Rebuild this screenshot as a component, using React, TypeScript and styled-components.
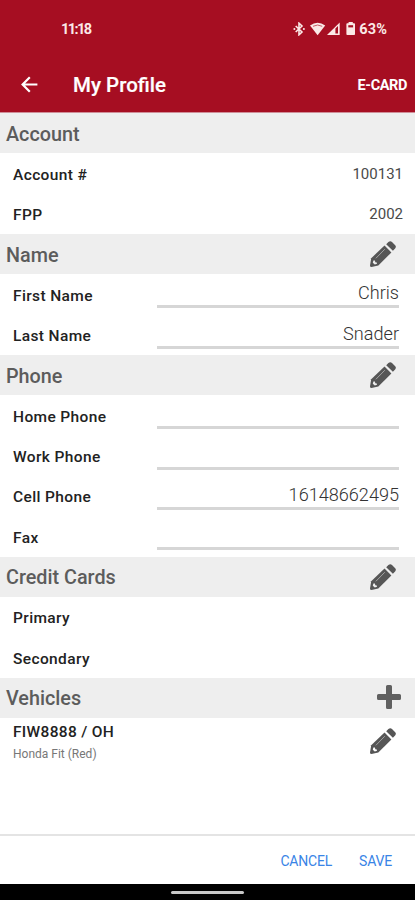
import React from 'react';
import styled, { createGlobalStyle } from 'styled-components';

const GlobalStyle = createGlobalStyle`
  * { box-sizing: border-box; }
  body { margin: 0; background: #fff; font-family: Roboto, "Liberation Sans", sans-serif; }
  button { font-family: inherit; border: 0; padding: 0; background: none; display: block; }
  svg { display: block; }
`;

const Screen = styled.div`
  width: 415px;
  height: 900px;
  display: flex;
  flex-direction: column;
  overflow: hidden;
  background: #fff;
`;

const Header = styled.header`
  flex: none;
  height: 113px;
  background: #a60e22;
  border-bottom: 1px solid #cf8e98;
  color: #fff;
`;

const StatusBar = styled.div`
  height: 58px;
  padding: 0 28px 0 61px;
  display: flex;
  align-items: center;
  justify-content: space-between;
  font-size: 14.5px;
  font-weight: 700;
  color: #fbe9e7;
`;

const Clock = styled.span`
  letter-spacing: -1.6px;
`;

const StatusIcons = styled.div`
  display: flex;
  align-items: center;
`;

const Battery = styled.span`
  margin-left: 3px;
  letter-spacing: 0.1px;
`;

const AppBar = styled.div`
  height: 54px;
  padding: 0 8px 0 21px;
  display: flex;
  align-items: center;
`;

const Title = styled.h1`
  margin: 0 0 0 35px;
  flex: 1;
  font-size: 20.5px;
  font-weight: 500;
  -webkit-text-stroke: 0.2px #fff;
`;

const HeaderAction = styled.button`
  color: #fff;
  font-size: 14.5px;
  font-weight: 700;
  letter-spacing: -0.4px;
`;

const Content = styled.main`
  flex: 1;
  min-height: 0;
`;

const SectionHead = styled.div`
  height: 40.35px;
  padding: 2px 0 0 6px;
  display: flex;
  align-items: center;
  justify-content: space-between;
  background: #eee;
`;

const SectionTitle = styled.h2`
  margin: 0;
  font-size: 19.8px;
  font-weight: 500;
  letter-spacing: 0;
  color: #5c5c5c;
`;

const IconButton = styled.button<{ $right?: number; $lift?: number }>`
  margin-right: ${(p) => p.$right ?? 19}px;
  margin-bottom: ${(p) => p.$lift ?? 2}px;
`;

const Row = styled.div`
  height: 40.35px;
  padding: 0 16px 0 13px;
  display: flex;
  align-items: center;
`;

const Label = styled.span`
  width: 144px;
  padding-top: 2px;
  font-size: 15.5px;
  font-weight: 500;
  letter-spacing: 0.38px;
  color: #222;
`;

const PlainValue = styled.span`
  flex: 1;
  margin-right: -4px;
  padding-top: 1px;
  text-align: right;
  font-size: 15px;
  letter-spacing: 0;
  color: #4a4a4a;
`;

const FieldValue = styled.div`
  flex: 1;
  align-self: flex-start;
  height: 34px;
  padding-top: 7px;
  border-bottom: 3px solid #d6d6d6;
  text-align: right;
  font-size: 18.1px;
  line-height: 23px;
  color: #333;
  font-weight: 300;
`;

const VehicleRow = styled.div`
  height: 48px;
  padding-left: 13px;
  display: flex;
  align-items: center;
  justify-content: space-between;
`;

const VehicleName = styled.div`
  font-size: 15.5px;
  line-height: 20px;
  font-weight: 500;
  letter-spacing: 0.32px;
  color: #222;
`;

const VehicleModel = styled.div`
  margin-top: 3px;
  font-size: 12px;
  line-height: 18px;
  color: #777;
`;

const Footer = styled.footer`
  flex: none;
  height: 50px;
  padding: 1px 23px 0 0;
  border-top: 2px solid #e4e4e4;
  display: flex;
  justify-content: flex-end;
  align-items: center;
  gap: 27px;
`;

const FooterButton = styled.button`
  color: #3984e6;
  font-size: 14px;
  letter-spacing: -0.2px;
`;

const NavBar = styled.div`
  flex: none;
  height: 16px;
  background: #000;
  display: flex;
  align-items: center;
  justify-content: center;
  padding-top: 1px;
`;

const NavHandle = styled.div`
  width: 73px;
  height: 3px;
  border-radius: 2px;
  background: #c8c8c8;
`;

const Pencil = ({ hole }: { hole: string }) => (
  <svg width="26" height="26" viewBox="0 0 26 26">
    <path d="M1.2 17.2 14.5 4.6 21.4 11.4 8.3 24.6 1.5 26Q0 26 0 24.5Z" fill="#565656" />
    <path d="M16.2 3.3 18.4 1.1Q20.3-.6 22 1L25.2 4.2Q26.6 5.8 25.1 7.4L22.9 9.8Z" fill="#565656" />
    <path d="M3.4 19.4 4.9 19.5 5.3 21.2 6.8 21.4 7 22.8 4.8 23.6 2.8 21.7Z" fill={hole} />
    <path d="M5.9 17.3 14.8 8.2" stroke="#aaa" strokeWidth=".9" />
  </svg>
);

const Plus = () => (
  <svg width="24" height="24" viewBox="0 0 24 24">
    <path
      d="M10.5 0H13.5Q15 0 15 1.5V9H22.5Q24 9 24 10.5V13.5Q24 15 22.5 15H15V22.5Q15 24 13.5 24H10.5Q9 24 9 22.5V15H1.5Q0 15 0 13.5V10.5Q0 9 1.5 9H9V1.5Q9 0 10.5 0Z"
      fill="#606060"
    />
  </svg>
);

const BackArrow = () => (
  <svg width="17" height="18" viewBox="0 0 17 18" fill="none" stroke="#fff" strokeWidth="2.2">
    <path d="M16.4 8.5H2M8.8 1.2 1.6 8.5 8.8 15.8" />
  </svg>
);

const SystemIcons = () => (
  <svg width="63" height="14" viewBox="0 0 63 14" fill="#fbe9e7">
    <path d="M2.7 4 9 10 6 12.8V1.2L9 4 2.7 10" fill="none" stroke="#fbe9e7" strokeWidth="1.6" />
    <circle cx="1.4" cy="7" r="1" />
    <circle cx="10.9" cy="7" r="1" />
    <path d="M17 3.5Q24.6-2 32.2 3.5L24.6 13.2Z" />
    <path d="M20 4.3Q24.6 1.7 29.2 4.3" fill="none" stroke="#c45a66" strokeWidth="1" />
    <path d="M46.7.6V13H34Z" />
    <path d="M42.4 6.5 45 4V11.6H42.4Z" fill="#a60e22" />
    <path d="M54.3 1.2H55.6V0H59.8V1.2H61.1Q62 1.2 62 2V12.2Q62 13 61.2 13H54.3Q53.4 13 53.4 12.2V2Q53.4 1.2 54.3 1.2Z" />
    <path d="M55.3 3.2H60.1V5.4H55.3Z" fill="#a60e22" />
  </svg>
);

const Section = ({ title, icon }: { title: string; icon?: 'pencil' | 'plus' }) => (
  <SectionHead>
    <SectionTitle>{title}</SectionTitle>
    {icon === 'pencil' && (
      <IconButton aria-label={`Edit ${title}`}>
        <Pencil hole="#eee" />
      </IconButton>
    )}
    {icon === 'plus' && (
      <IconButton $right={14} $lift={4} aria-label={`Add ${title}`}>
        <Plus />
      </IconButton>
    )}
  </SectionHead>
);

const Field = ({ label, value }: { label: string; value?: string }) => (
  <Row>
    <Label>{label}</Label>
    <FieldValue>{value}</FieldValue>
  </Row>
);

const Info = ({ label, value }: { label: string; value?: string }) => (
  <Row>
    <Label>{label}</Label>
    <PlainValue>{value}</PlainValue>
  </Row>
);

export default function App() {
  return (
    <Screen>
      <GlobalStyle />
      <Header>
        <StatusBar>
          <Clock>11:18</Clock>
          <StatusIcons>
            <SystemIcons />
            <Battery>63%</Battery>
          </StatusIcons>
        </StatusBar>
        <AppBar>
          <BackArrow />
          <Title>My Profile</Title>
          <HeaderAction>E-CARD</HeaderAction>
        </AppBar>
      </Header>
      <Content>
        <Section title="Account" />
        <Info label="Account #" value="100131" />
        <Info label="FPP" value="2002" />
        <Section title="Name" icon="pencil" />
        <Field label="First Name" value="Chris" />
        <Field label="Last Name" value="Snader" />
        <Section title="Phone" icon="pencil" />
        <Field label="Home Phone" />
        <Field label="Work Phone" />
        <Field label="Cell Phone" value="16148662495" />
        <Field label="Fax" />
        <Section title="Credit Cards" icon="pencil" />
        <Info label="Primary" />
        <Info label="Secondary" />
        <Section title="Vehicles" icon="plus" />
        <VehicleRow>
          <div>
            <VehicleName>FIW8888 / OH</VehicleName>
            <VehicleModel>Honda Fit (Red)</VehicleModel>
          </div>
          <IconButton $lift={3} aria-label="Edit vehicle">
            <Pencil hole="#fff" />
          </IconButton>
        </VehicleRow>
      </Content>
      <Footer>
        <FooterButton>CANCEL</FooterButton>
        <FooterButton>SAVE</FooterButton>
      </Footer>
      <NavBar>
        <NavHandle />
      </NavBar>
    </Screen>
  );
}
